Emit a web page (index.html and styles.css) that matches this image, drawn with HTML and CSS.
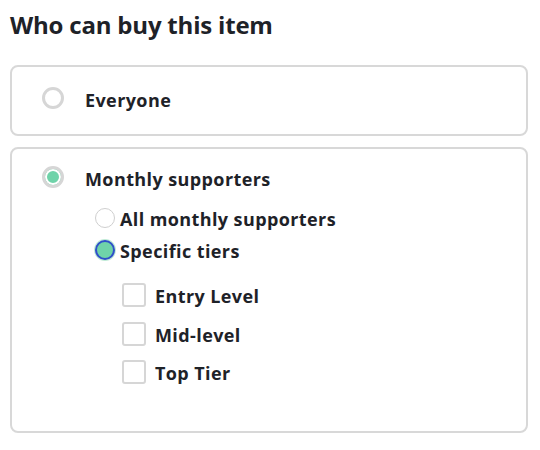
FILE: index.html
```html
<!DOCTYPE html>
<html>
<head>
<meta charset="utf-8">
<link rel="stylesheet" href="styles.css">
</head>
<body>
<div class="page">
  <h1 class="title">Who can buy this item</h1>
  <div class="option option-short">
    <div class="row">
      <span class="radio"></span>
      <span class="label">Everyone</span>
    </div>
  </div>
  <div class="option option-tall">
    <div class="row">
      <span class="radio radio-checked"></span>
      <span class="label">Monthly supporters</span>
    </div>
    <div class="sub">
      <div class="sub-row">
        <span class="mini-radio"></span>
        <span class="label">All monthly supporters</span>
      </div>
      <div class="sub-row">
        <span class="mini-radio mini-checked"></span>
        <span class="label">Specific tiers</span>
      </div>
      <div class="tiers">
        <div class="tier-row"><span class="checkbox"></span><span class="label">Entry Level</span></div>
        <div class="tier-row"><span class="checkbox"></span><span class="label">Mid-level</span></div>
        <div class="tier-row"><span class="checkbox"></span><span class="label">Top Tier</span></div>
      </div>
    </div>
  </div>
</div>
</body>
</html>
```
FILE: styles.css
```css
html, body {
  margin: 0;
  padding: 0;
  background: #ffffff;
}
body {
  font-family: "Open Sans", "Noto Sans", sans-serif;
  color: #1e2228;
}
.page {
  padding: 9px 12px 0 10px;
}
.title {
  margin: 0;
  font-size: 24px;
  line-height: 32px;
  font-weight: 700;
  letter-spacing: -0.2px;
}
.option {
  border: 2px solid #d8d8d8;
  border-radius: 8px;
  padding-left: 30px;
}
.option-short {
  margin-top: 24px;
  padding-top: 21px;
  padding-bottom: 22px;
}
.option-tall {
  margin-top: 11px;
  padding-top: 18px;
  padding-bottom: 46px;
}
.row {
  display: flex;
  align-items: flex-start;
  gap: 21px;
}
.label {
  font-size: 18px;
  line-height: 24px;
  font-weight: 700;
  letter-spacing: 0.4px;
  white-space: nowrap;
}
.radio {
  box-sizing: border-box;
  width: 22px;
  height: 22px;
  margin-top: -1px;
  border: 3px solid #d6d6d6;
  border-radius: 50%;
  background: #fff;
  flex: none;
}
.radio-checked {
  background: #6fd3a9;
  box-shadow: inset 0 0 0 2px #ffffff;
}
.sub {
  margin-top: 16px;
  margin-left: 53px;
  display: flex;
  flex-direction: column;
  gap: 8px;
}
.sub-row {
  display: flex;
  align-items: flex-start;
  gap: 5px;
}
.mini-radio {
  box-sizing: border-box;
  width: 20px;
  height: 20px;
  margin-top: 1px;
  border: 1px solid #cfcfcf;
  border-radius: 50%;
  background: #fff;
  flex: none;
}
.mini-checked {
  border: 2px solid #2f4fc9;
  background: #6fd3a9;
  box-shadow: 0 0 0 1px #bfead6;
}
.tiers {
  margin-top: 13px;
  margin-left: 27px;
  display: flex;
  flex-direction: column;
  gap: 14.5px;
}
.tier-row {
  display: flex;
  align-items: flex-start;
  gap: 9px;
}
.checkbox {
  box-sizing: border-box;
  width: 24px;
  height: 24px;
  margin-top: -1px;
  border: 2px solid #d6d6d6;
  border-radius: 3px;
  background: #fff;
  flex: none;
}
```
